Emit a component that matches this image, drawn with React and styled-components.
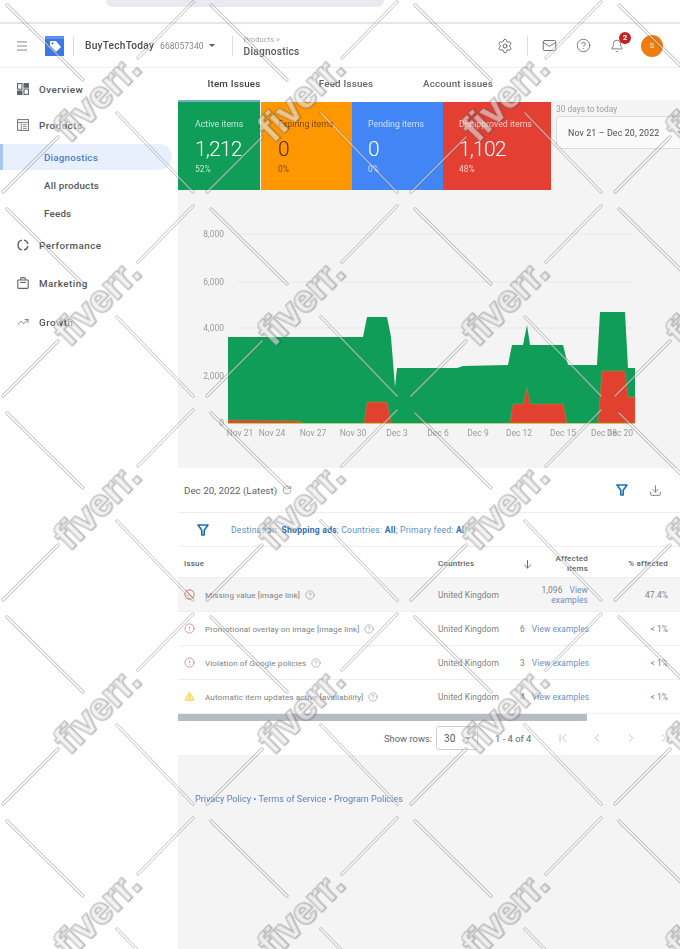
import React from "react";
import styled, { createGlobalStyle } from "styled-components";
import {
  Menu,
  Settings,
  Mail,
  CircleHelp,
  Bell,
  Download,
  RotateCw,
  ChevronLeft,
  ChevronRight,
  ChevronFirst,
  ChevronLast,
  CircleAlert,
  TriangleAlert,
  TrendingUp,
} from "lucide-react";

const GlobalStyle = createGlobalStyle`
  html, body {
    margin: 0;
    padding: 0;
    background: #fff;
  }
  * {
    box-sizing: border-box;
  }
  body {
    font-family: Roboto, "Liberation Sans", sans-serif;
  }
`;

const Page = styled.div`
  position: relative;
  width: 680px;
  height: 949px;
  overflow: hidden;
  display: flex;
  flex-direction: column;
  background: #fff;
`;

const Blurred = styled.div`
  flex: 1;
  display: flex;
  flex-direction: column;
  min-height: 0;
  filter: blur(0.45px);
`;

const TopStrip = styled.div`
  height: 24px;
  flex: none;
  padding-left: 106px;
  border-bottom: 2px solid #e6e6e6;
`;

const SearchEdge = styled.div`
  width: 278px;
  height: 7px;
  background: #eaeaee;
  border-radius: 0 0 22px 22px;
`;

const TopBar = styled.header`
  height: 44px;
  flex: none;
  display: flex;
  align-items: center;
  border-bottom: 1px solid #eeeeee;
  color: #5f6368;
`;

const MenuSlot = styled.div`
  width: 45px;
  padding-left: 15px;
  display: flex;
`;

const Divider = styled.div`
  width: 1px;
  height: ${(p) => p.$h || 18}px;
  background: #dadce0;
  margin: 0 ${(p) => p.$right || 0}px 0 ${(p) => p.$left || 0}px;
`;

const Account = styled.span`
  font-size: 10.2px;
  font-weight: 500;
  letter-spacing: 0.2px;
  color: #4a4d52;
`;

const AccountId = styled.span`
  font-size: 8.6px;
  color: #85888c;
  margin: 0 5px 0 6px;
`;

const Crumbs = styled.div`
  display: flex;
  flex-direction: column;
  gap: 2px;
`;

const CrumbTop = styled.span`
  font-size: 7.6px;
  color: #a2a5a9;
`;

const CrumbTitle = styled.span`
  font-size: 10.2px;
  font-weight: 500;
  letter-spacing: 0.2px;
  color: #55585c;
`;

const BarTools = styled.div`
  margin-left: auto;
  display: flex;
  align-items: center;
  padding-right: 17px;
`;

const MailSlot = styled.div`
  display: flex;
  margin-right: 19px;
`;

const BellWrap = styled.div`
  position: relative;
  display: flex;
  margin: 0 17px 0 19px;
`;

const BellBadge = styled.span`
  position: absolute;
  top: -7px;
  right: -7px;
  width: 12px;
  height: 12px;
  border-radius: 50%;
  background: #c5221f;
  color: #fff;
  font-size: 8px;
  font-weight: 700;
  display: flex;
  align-items: center;
  justify-content: center;
`;

const Avatar = styled.div`
  width: 22px;
  height: 22px;
  border-radius: 50%;
  background: #ee7d0e;
  color: #ffd9b0;
  font-size: 8px;
  font-weight: 500;
  display: flex;
  align-items: center;
  justify-content: center;
`;

const Body = styled.div`
  flex: 1;
  display: flex;
  min-height: 0;
`;

const Sidebar = styled.nav`
  width: 178px;
  flex: none;
  padding-top: 3px;
  background: #fff;
`;

const NavItem = styled.div`
  height: ${(p) => p.$h}px;
  display: flex;
  align-items: center;
  gap: 10px;
  padding-left: 17px;
  font-size: 9.8px;
  font-weight: 500;
  letter-spacing: 0.5px;
  color: #53565a;
`;

const SubItem = styled.div`
  height: ${(p) => (p.$active ? 26 : 28)}px;
  width: 172px;
  margin: ${(p) => (p.$active ? "1px 0" : "0")};
  display: flex;
  align-items: center;
  padding-left: 44px;
  font-size: 9.8px;
  font-weight: 500;
  letter-spacing: 0.2px;
  border-radius: 0 13px 13px 0;
  color: ${(p) => (p.$active ? "#4a7fd0" : "#53565a")};
  background: ${(p) => (p.$active ? "#e8f0fe" : "transparent")};
  border-left: ${(p) => (p.$active ? "3px solid #a9c6f7" : "none")};
  text-indent: ${(p) => (p.$active ? "-3px" : "0")};
`;

const Main = styled.main`
  flex: 1;
  min-width: 0;
  background: #f4f4f4;
  display: flex;
  flex-direction: column;
`;

const Tabs = styled.div`
  height: 32px;
  flex: none;
  display: flex;
  padding-bottom: 2px;
  background: #fff;
`;

const Tab = styled.div`
  width: 112px;
  display: flex;
  align-items: center;
  justify-content: center;
  font-size: 9.8px;
  font-weight: 500;
  letter-spacing: 0.2px;
  color: ${(p) => (p.$active ? "#3c4043" : "#5f6368")};
`;

const StatRow = styled.div`
  height: 90px;
  flex: none;
  display: flex;
`;

const StatCard = styled.div`
  width: ${(p) => p.$w}px;
  margin-right: ${(p) => p.$gap || 0}px;
  padding: 16px 0 0 ${(p) => p.$pad || 16}px;
  background: ${(p) => p.$bg};
  color: ${(p) => p.$fg || "#fff"};
  border-top: 2px solid ${(p) => (p.$active ? "#6fb3c4" : "#fff")};
  display: flex;
  flex-direction: column;
`;

const StatLabel = styled.span`
  font-size: 8.8px;
  line-height: 12px;
  opacity: 0.75;
`;

const StatValue = styled.span`
  font-size: 21px;
  font-weight: 300;
  letter-spacing: -0.8px;
  line-height: 26px;
  margin-top: 6px;
`;

const StatPct = styled.span`
  font-size: 8.4px;
  line-height: 10px;
  margin-top: 2px;
  opacity: 0.75;
`;

const DateBlock = styled.div`
  margin-left: 5px;
  padding-top: 4px;
  flex: 1;
  min-width: 0;
`;

const DateLabel = styled.div`
  font-size: 8.4px;
  line-height: 10px;
  color: #a0a0a0;
  margin-bottom: 2px;
`;

const DateBox = styled.div`
  width: 134px;
  height: 33px;
  padding: 0 5px 0 11px;
  background: #fafafa;
  border: 1px solid #dcdcdc;
  border-radius: 3px;
  display: flex;
  align-items: center;
  gap: 18px;
  font-size: 8.9px;
  letter-spacing: 0.1px;
  color: #4a4d52;
  white-space: nowrap;
`;

const Caret = styled.span`
  width: 0;
  height: 0;
  flex: none;
  border-left: 3px solid transparent;
  border-right: 3px solid transparent;
  border-top: 3.5px solid ${(p) => p.$color || "#5a5a5a"};
`;

const ChartArea = styled.section`
  height: 278px;
  flex: none;
  display: block;
`;

const ChartSvg = styled.svg`
  display: block;
  text {
    font-family: Roboto, "Liberation Sans", sans-serif;
    font-size: 8.5px;
    fill: #9b9b9b;
  }
`;

const TablePanel = styled.section`
  height: 287px;
  flex: none;
  background: #fff;
  display: flex;
  flex-direction: column;
`;

const PanelHead = styled.div`
  height: 45px;
  flex: none;
  display: flex;
  align-items: center;
  padding: 0 18px 0 6px;
  border-bottom: 1px solid #efefef;
  font-size: 9.8px;
  color: #5f6368;
  gap: 5px;
`;

const HeadActions = styled.div`
  margin-left: auto;
  display: flex;
  align-items: center;
  gap: 21px;
`;

const FilterRow = styled.div`
  height: 34px;
  flex: none;
  display: flex;
  align-items: center;
  gap: 22px;
  padding-left: 19px;
  border-bottom: 1px solid #efefef;
  font-size: 8.6px;
  letter-spacing: 0.22px;
  color: #5b8fc9;
  b {
    color: #2f6fb5;
    font-weight: 700;
  }
`;

const TableRow = styled.div`
  height: ${(p) => p.$h || 34}px;
  flex: none;
  display: grid;
  grid-template-columns: 260px 82px 68px 80px;
  align-items: center;
  padding-top: ${(p) => p.$top || 0}px;
  font-size: 8.4px;
  letter-spacing: 0.1px;
  color: #7c7f83;
  background: ${(p) => (p.$hover ? "#f5f5f5" : "#fff")};
  border-bottom: 1px solid #efefef;
`;

const HeadCell = styled.div`
  font-size: 8px;
  font-weight: 500;
  letter-spacing: 0.2px;
  color: #5f6368;
  text-align: ${(p) => (p.$right ? "right" : "left")};
  padding-left: ${(p) => p.$pad || 0}px;
  line-height: 10px;
`;

const SortedHead = styled(HeadCell)`
  display: flex;
  align-items: center;
  justify-content: space-between;
  gap: 12px;
  padding-left: 3px;
`;

const IssueCell = styled.div`
  display: flex;
  align-items: center;
  padding-left: 6px;
  gap: 10px;
`;

const IssueText = styled.span`
  font-size: 8.1px;
  margin-right: -5px;
`;

const AffectedCell = styled.div`
  text-align: right;
  line-height: 10px;
  white-space: ${(p) => (p.$wrap ? "normal" : "nowrap")};
`;

const Count = styled.span`
  margin-right: 7px;
`;

const ViewLink = styled.span`
  color: #6d8fc4;
`;

const PctCell = styled.div`
  text-align: right;
`;

const Scrollbar = styled.div`
  width: 409px;
  height: 7px;
  flex: none;
  background: #b7bcc2;
`;

const Pager = styled.div`
  flex: 1;
  display: flex;
  align-items: center;
  padding-left: 206px;
  font-size: 9.4px;
  color: #5f6368;
`;

const RowsSelect = styled.div`
  width: 42px;
  height: 24px;
  margin: 0 17px 0 4px;
  padding: 0 6px 0 7px;
  display: flex;
  align-items: center;
  justify-content: space-between;
  border: 1px solid #d0d0d0;
  border-radius: 3px;
  font-size: 10px;
  color: #5a5a5a;
`;

const PagerIcons = styled.div`
  margin-left: 25px;
  display: flex;
  gap: 20px;
  color: #a9acb0;
`;

const Footer = styled.div`
  padding: 39px 0 0 17px;
  font-size: 9.1px;
  color: #5d83ba;
`;

const OverlaySvg = styled.svg`
  position: absolute;
  top: 0;
  left: 0;
  pointer-events: none;
  text {
    font-family: "Liberation Sans", sans-serif;
    font-weight: 700;
    font-size: 38px;
    fill: rgba(255, 255, 255, 0.5);
    stroke: rgba(95, 95, 95, 0.36);
    stroke-width: 2.2px;
    paint-order: stroke;
    text-anchor: middle;
    dominant-baseline: central;
    filter: drop-shadow(1px 1px 0 rgba(0, 0, 0, 0.16));
  }
`;

const LogoMark = () => (
  <svg width="19" height="20" viewBox="0 0 19 20">
    <rect width="19" height="20" fill="#3b78e7" />
    <rect width="19" height="3" fill="#5a92ef" />
    <path d="M5 5 L11 5 L16 11 L11 16 L5 10 Z" fill="#fff" />
    <circle cx="7.5" cy="7.5" r="1.1" fill="#3b78e7" />
  </svg>
);

const OverviewIcon = () => (
  <svg width="12" height="12" viewBox="0 0 12 12" fill="none" stroke="#5f6368" strokeWidth="1.1">
    <rect x="0.6" y="0.6" width="4.4" height="5.6" />
    <rect x="7" y="0.6" width="4.4" height="3.6" fill="#5f6368" />
    <rect x="0.6" y="8" width="4.4" height="3.4" fill="#5f6368" />
    <rect x="7" y="6" width="4.4" height="5.4" />
  </svg>
);

const ProductsIcon = () => (
  <svg width="12" height="12" viewBox="0 0 12 12" fill="none" stroke="#6b6e72" strokeWidth="1">
    <rect x="0.6" y="0.6" width="10.8" height="10.8" />
    <path d="M0.6 3.4 H11.4 M4.2 3.4 V11.4 M6 5.4 H9.6 M6 7.4 H9.6 M6 9.4 H9.6" strokeWidth="0.8" />
  </svg>
);

const PerformanceIcon = () => (
  <svg width="12" height="12" viewBox="0 0 12 12" fill="none" stroke="#5f6368" strokeWidth="1.4">
    <path d="M7 1.1 A5 5 0 0 1 10.9 5" />
    <path d="M10.9 7 A5 5 0 0 1 7 10.9" />
    <path d="M5 10.9 A5 5 0 0 1 5 1.1" />
  </svg>
);

const MarketingIcon = () => (
  <svg width="12" height="12" viewBox="0 0 12 12" fill="none" stroke="#5f6368" strokeWidth="1.1">
    <rect x="0.8" y="3" width="10.4" height="8.4" rx="0.8" />
    <path d="M3.6 3 V2 A1.4 1.4 0 0 1 5 0.6 H7 A1.4 1.4 0 0 1 8.4 2 V3" />
    <path d="M3.2 5.4 H8.8" />
  </svg>
);

const FunnelIcon = ({ size = 12 }) => (
  <svg width={size} height={size} viewBox="0 0 12 12" fill="none" stroke="#1a6fb5" strokeWidth="1.6">
    <path d="M1 1 H11 L7.2 6.2 V11 H4.8 V6.2 Z" strokeLinejoin="round" />
  </svg>
);

const MissingIcon = () => (
  <svg width="11" height="11" viewBox="0 0 11 11" fill="none" stroke="#d9857e" strokeWidth="1.1">
    <circle cx="5.5" cy="5.5" r="4.6" />
    <path d="M2.2 2.2 L8.8 8.8" />
    <path d="M3.4 7.4 L5 5.6 L6.4 7" strokeWidth="0.8" />
  </svg>
);

const SortArrow = () => (
  <svg width="9" height="10" viewBox="0 0 9 10" fill="none" stroke="#6a6d71" strokeWidth="1">
    <path d="M4.5 1 V9 M1.2 5.8 L4.5 9 L7.8 5.8" />
  </svg>
);

const greenArea =
  "228,337 363,337 367,317 387,317 391,337 395,387 397,368 457,368 463,366 508,365 512,345 523,345 527,325 530,345 563,345 568,365 597,365 600,312 625,312 628,368 635,368 635,423 228,423";

const redAreas = [
  "228,420 300,421 302,423 228,423",
  "364,423 367,402 387,402 391,423",
  "510,423 513,404 523,404 527,388 530,404 563,404 567,423",
  "598,423 602,371 625,371 628,397 635,397 635,423",
];

const yTicks = [
  { label: "8,000", y: 234 },
  { label: "6,000", y: 282 },
  { label: "4,000", y: 328 },
  { label: "2,000", y: 376 },
  { label: "0", y: 423 },
];

const xTicks = [
  ["Nov 21", 240],
  ["Nov 24", 272],
  ["Nov 27", 313],
  ["Nov 30", 353],
  ["Dec 3", 397],
  ["Dec 6", 438],
  ["Dec 9", 478],
  ["Dec 12", 519],
  ["Dec 15", 563],
  ["Dec 18", 604],
  ["Dec 20", 620],
];

const ItemsChart = () => (
  <ChartSvg width="502" height="278" viewBox="178 190 502 278">
    {yTicks.map((t) => (
      <g key={t.label}>
        <line x1="238" x2="633" y1={t.y} y2={t.y} stroke="#e8e8e8" strokeWidth="1" />
        <text x="224" y={t.y + 3} textAnchor="end">
          {t.label}
        </text>
      </g>
    ))}
    <polygon points={greenArea} fill="#0f9d58" />
    {redAreas.map((pts) => (
      <polygon key={pts} points={pts} fill="#e2412f" stroke="#b5893a" strokeWidth="0.5" />
    ))}
    <line x1="228" x2="635" y1="423.5" y2="423.5" stroke="#b9c94a" strokeWidth="0.8" />
    {xTicks.map(([label, x]) => (
      <text key={label} x={x} y="436" textAnchor="middle">
        {label}
      </text>
    ))}
  </ChartSvg>
);

const issues = [
  { name: "Missing value [image link]", kind: "missing", count: "1,096", pct: "47.4%", hover: true },
  { name: "Promotional overlay on image [image link]", kind: "error", count: "6", pct: "< 1%" },
  { name: "Violation of Google policies", kind: "error", count: "3", pct: "< 1%" },
  { name: "Automatic item updates active [availability]", kind: "warn", count: "4", pct: "< 1%" },
];

const IssueIcon = ({ kind }) => {
  if (kind === "missing") return <MissingIcon />;
  if (kind === "warn") return <TriangleAlert size={11} color="#e8c94a" fill="#fbe88a" strokeWidth={1.2} />;
  return <CircleAlert size={11} color="#d9605a" strokeWidth={1.4} />;
};

const markX = [97, 301, 505, 709];
const markY = [98, 302, 506, 710, 914];
const markLines = "M7 5 L83 80 M193 2 L138 58 M117 113 L193 192 M58 137 L3 192";

const Watermark = () => (
  <OverlaySvg width="680" height="949" viewBox="0 0 680 949">
    <defs>
      <mask id="hollow" maskUnits="userSpaceOnUse" x="0" y="0" width="204" height="204">
        <rect width="204" height="204" fill="#fff" />
        <path d={markLines} stroke="#000" strokeWidth="1.7" strokeLinecap="round" />
      </mask>
      <pattern id="markLines" width="204" height="204" patternUnits="userSpaceOnUse">
        <path
          d={markLines}
          stroke="rgba(95, 95, 95, 0.42)"
          strokeWidth="3.2"
          strokeLinecap="round"
          mask="url(#hollow)"
        />
        <path d={markLines} stroke="rgba(255, 255, 255, 0.4)" strokeWidth="1.7" strokeLinecap="round" />
      </pattern>
    </defs>
    <rect width="680" height="949" fill="url(#markLines)" />
    {markY.map((y) =>
      markX.map((x) => (
        <text key={`${x}-${y}`} x={x} y={y} transform={`rotate(-45 ${x} ${y})`}>
          fiverr.
        </text>
      ))
    )}
  </OverlaySvg>
);

const App = () => {
  return (
    <>
      <GlobalStyle />
      <Page>
        <Blurred>
          <TopStrip>
            <SearchEdge />
          </TopStrip>
          <TopBar>
            <MenuSlot>
              <Menu size={14} strokeWidth={1.3} />
            </MenuSlot>
            <LogoMark />
            <Divider $h={20} $left={9} $right={11} />
            <Account>BuyTechToday</Account>
            <AccountId>668057340</AccountId>
            <Caret />
            <Divider $h={20} $left={17} $right={11} />
            <Crumbs>
              <CrumbTop>Products &gt;</CrumbTop>
              <CrumbTitle>Diagnostics</CrumbTitle>
            </Crumbs>
            <BarTools>
              <Settings size={16} strokeWidth={1.4} />
              <Divider $h={20} $left={14} $right={14} />
              <MailSlot>
                <Mail size={15} strokeWidth={1.4} />
              </MailSlot>
              <CircleHelp size={15} strokeWidth={1.3} />
              <BellWrap>
                <Bell size={14} strokeWidth={1.4} />
                <BellBadge>2</BellBadge>
              </BellWrap>
              <Avatar>S</Avatar>
            </BarTools>
          </TopBar>
          <Body>
            <Sidebar>
              <NavItem $h={36}>
                <OverviewIcon />
                Overview
              </NavItem>
              <NavItem $h={36}>
                <ProductsIcon />
                Products
              </NavItem>
              <SubItem $active>Diagnostics</SubItem>
              <SubItem>All products</SubItem>
              <SubItem>Feeds</SubItem>
              <NavItem $h={36}>
                <PerformanceIcon />
                Performance
              </NavItem>
              <NavItem $h={40}>
                <MarketingIcon />
                Marketing
              </NavItem>
              <NavItem $h={38}>
                <TrendingUp size={12} strokeWidth={1.4} />
                Growth
              </NavItem>
            </Sidebar>
            <Main>
              <Tabs>
                <Tab $active>Item Issues</Tab>
                <Tab>Feed Issues</Tab>
                <Tab>Account issues</Tab>
              </Tabs>
              <StatRow>
                <StatCard $w={82} $bg="#0f9d58" $pad={17} $active $gap={1}>
                  <StatLabel>Active items</StatLabel>
                  <StatValue>1,212</StatValue>
                  <StatPct>52%</StatPct>
                </StatCard>
                <StatCard $w={91} $bg="#ff9800" $fg="#4a2c00" $pad={17} $gap={0}>
                  <StatLabel>Expiring items</StatLabel>
                  <StatValue>0</StatValue>
                  <StatPct>0%</StatPct>
                </StatCard>
                <StatCard $w={91} $bg="#4285f4">
                  <StatLabel>Pending items</StatLabel>
                  <StatValue>0</StatValue>
                  <StatPct>0%</StatPct>
                </StatCard>
                <StatCard $w={108} $bg="#e33f33">
                  <StatLabel>Disapproved items</StatLabel>
                  <StatValue>1,102</StatValue>
                  <StatPct>48%</StatPct>
                </StatCard>
                <DateBlock>
                  <DateLabel>30 days to today</DateLabel>
                  <DateBox>
                    Nov 21 – Dec 20, 2022
                    <Caret />
                  </DateBox>
                </DateBlock>
              </StatRow>
              <ChartArea>
                <ItemsChart />
              </ChartArea>
              <TablePanel>
                <PanelHead>
                  Dec 20, 2022 (Latest)
                  <RotateCw size={10} strokeWidth={1.4} />
                  <HeadActions>
                    <FunnelIcon />
                    <Download size={13} strokeWidth={1.4} />
                  </HeadActions>
                </PanelHead>
                <FilterRow>
                  <FunnelIcon />
                  <span>
                    Destination: <b>Shopping ads</b>; Countries: <b>All</b>; Primary feed: <b>All</b>
                  </span>
                </FilterRow>
                <TableRow $h={31} $top={3}>
                  <HeadCell $pad={6}>Issue</HeadCell>
                  <HeadCell>Countries</HeadCell>
                  <SortedHead $right>
                    <SortArrow />
                    <span>
                      Affected
                      <br />
                      items
                    </span>
                  </SortedHead>
                  <HeadCell $right>% affected</HeadCell>
                </TableRow>
                {issues.map((row) => (
                  <TableRow key={row.name} $hover={row.hover}>
                    <IssueCell>
                      <IssueIcon kind={row.kind} />
                      <IssueText>{row.name}</IssueText>
                      <CircleHelp size={10} strokeWidth={1.2} />
                    </IssueCell>
                    <div>United Kingdom</div>
                    <AffectedCell $wrap={row.hover}>
                      <Count>{row.count}</Count>
                      <ViewLink>View examples</ViewLink>
                    </AffectedCell>
                    <PctCell>{row.pct}</PctCell>
                  </TableRow>
                ))}
                <Scrollbar />
                <Pager>
                  Show rows:
                  <RowsSelect>
                    30
                    <Caret />
                  </RowsSelect>
                  1 - 4 of 4
                  <PagerIcons>
                    <ChevronFirst size={14} strokeWidth={1.2} />
                    <ChevronLeft size={14} strokeWidth={1.2} />
                    <ChevronRight size={14} strokeWidth={1.2} />
                    <ChevronLast size={14} strokeWidth={1.2} />
                  </PagerIcons>
                </Pager>
              </TablePanel>
              <Footer>Privacy Policy • Terms of Service • Program Policies</Footer>
            </Main>
          </Body>
        </Blurred>
        <Watermark />
      </Page>
    </>
  );
};

export default App;
